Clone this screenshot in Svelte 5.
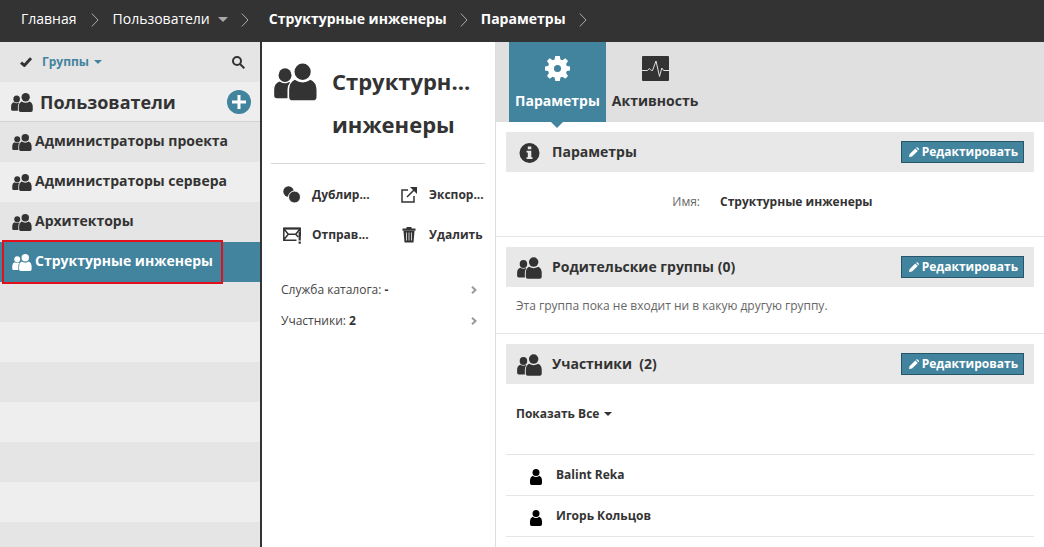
<script>
  const groups = [
    { name: 'Администраторы проекта' },
    { name: 'Администраторы сервера' },
    { name: 'Архитекторы' },
    { name: 'Структурные инженеры', current: true }
  ];
  const actions = [
    { icon: 'duplicate', label: 'Дублир...' },
    { icon: 'export', label: 'Экспор...' },
    { icon: 'send', label: 'Отправ...' },
    { icon: 'trash', label: 'Удалить' }
  ];
  const facts = [
    { label: 'Служба каталога:', value: '-' },
    { label: 'Участники:', value: '2' }
  ];
  const members = ['Balint Reka', 'Игорь Кольцов'];
</script>

{#snippet people()}
  <svg class="people" viewBox="0 0 44 38" aria-hidden="true">
    <ellipse cx="11.3" cy="12" rx="6.6" ry="7" />
    <path d="M5.8 18.4q5.4 3.6 9.6.6l1 .6q-2.6 3-2.6 7.400v8.600H3q-2.800 0-2.800-2.800V27q0-6.800 5.600-8.600z" />
    <ellipse cx="29.300" cy="8.500" rx="8.300" ry="8.400" />
    <path d="M21.200 16.800q8 5.200 16.200 0Q43.500 19.800 43.500 27v7.300q0 3.500-3.500 3.500H19q-3.500 0-3.500-3.500V27q0-7.200 5.700-10.200z" />
  </svg>
{/snippet}

{#snippet chevron()}
  <svg class="chevron" viewBox="0 0 8 14" aria-hidden="true"><path d="M.8.5 7 7 .8 13.500" /></svg>
{/snippet}

{#snippet edit()}
  <button class="edit">
    <svg viewBox="0 0 10 10" aria-hidden="true">
      <path d="M0 10 .5 7.200 6.300 1.400 8.800 3.900 3 9.600zM7 .8q1-1 2-.1l.5.5q.9 1 0 2z" />
    </svg>
    Редактировать
  </button>
{/snippet}

<div class="page">
  <nav class="crumbs">
    <a href="#home" class="home">Главная</a>
    {@render chevron()}
    <a href="#users" class="with-caret">Пользователи <span class="caret"></span></a>
    {@render chevron()}
    <a href="#group" class="strong wide">Структурные инженеры</a>
    {@render chevron()}
    <a href="#settings" class="strong">Параметры</a>
    {@render chevron()}
  </nav>

  <div class="columns">
    <aside class="sidebar">
      <div class="filter">
        <svg class="check" viewBox="0 0 12 10" aria-hidden="true"><path d="M1 5.600 4.400 8.400 11 1.200" /></svg>
        <button class="group-menu">Группы <span class="caret"></span></button>
        <button class="search" aria-label="Поиск">
          <svg viewBox="0 0 13 13" aria-hidden="true"><circle cx="5" cy="5" r="4" /><path d="M8 8l4.300 4.300" /></svg>
        </button>
      </div>
      <div class="list-head">
        {@render people()}
        <h2>Пользователи</h2>
        <button class="add" aria-label="Добавить">
          <svg viewBox="0 0 24 24" aria-hidden="true"><circle cx="12" cy="12" r="12" /><path d="M12 5v14M5 12h14" /></svg>
        </button>
      </div>
      <ul class="groups">
        {#each groups as group}
          <li class:current={group.current}>
            <a href="#group">{@render people()}{group.name}</a>
          </li>
        {/each}
      </ul>
    </aside>

    <section class="summary">
      <header>
        {@render people()}
        <h1><span>Структурн...</span><span>инженеры</span></h1>
      </header>
      <div class="actions">
        {#each actions as action}
          <button>
            <svg viewBox="0 0 18 18" aria-hidden="true">
              {#if action.icon === 'duplicate'}
                <circle cx="5.500" cy="5.500" r="5.200" />
                <circle class="halo" cx="11.500" cy="11" r="6" />
              {:else if action.icon === 'export'}
                <path class="line thin" d="M8 4H2v12h12v-6M7 11l7-7" />
                <path d="M10 1h7v7z" />
              {:else if action.icon === 'send'}
                <path class="line thin" d="M13.500 14.200H.8V2.500h16.400V10M1 3l4.300 5.200h7.400L17 3M1 13.500l4.300-5.300M12.700 8.200l2.600 2.800" />
                <path d="M.3 1.500h17.400v2H.3zM15.600 6h2.200v8.500h-2.200zM15.600 15.500h2.200v2.200h-2.200z" />
              {:else}
                <path d="M2.500 2.500h4V1h5v1.500h4v2.200h-13zM3.500 5h11l-1 11.500h-9z" />
                <path class="slots" d="M6.500 6.500v8M9 6.500v8M11.500 6.500v8" />
              {/if}
            </svg>
            {action.label}
          </button>
        {/each}
      </div>
      <ul class="facts">
        {#each facts as fact}
          <li>
            <a href="#fact">
              <span>{fact.label} <b>{fact.value}</b></span>
              <svg viewBox="0 0 6 8" aria-hidden="true"><path d="M1 .8 4.500 4 1 7.200" /></svg>
            </a>
          </li>
        {/each}
      </ul>
    </section>

    <main>
      <nav class="tabs">
        <a href="#settings" class="active">
          <svg class="gear" viewBox="0 0 24 24" aria-hidden="true">
            <path
              fill-rule="evenodd"
              d="M9.800 0h4.400l.6 3.300 1.900.8 2.800-1.900 2.600 2.600-1.900 2.800.8 1.900 3 .6v3.800l-3 .6-.8 1.900 1.900 2.800-2.600 2.600-2.800-1.900-1.900.8-.6 3.300H9.800l-.6-3.300-1.900-.8-2.800 1.900-2.600-2.600 1.900-2.800-.8-1.900-3-.6v-3.800l3-.6.8-1.900-1.900-2.800 2.600-2.600 2.800 1.900 1.900-.8zM12 8.600a3.400 3.400 0 1 0 0 6.800 3.400 3.400 0 0 0 0-6.800z"
            />
          </svg>
          Параметры
        </a>
        <a href="#activity">
          <svg class="pulse" viewBox="0 0 27 25" aria-hidden="true">
            <rect width="27" height="25" rx="1" />
            <path d="M0 14.500h5.500l1.800-2 2 2h1.200L14 5l3.500 15.500 2.300-8.500 1.800 2.500H27" />
          </svg>
          Активность
        </a>
      </nav>

      <section class="block">
        <div class="bar">
          <svg class="info" viewBox="0 0 20 20" aria-hidden="true">
            <circle cx="10" cy="10" r="10" />
            <path d="M8.300 3.500h3.500v2.700H8.300zM7 7.800h4.800v6.500H13V16H7v-1.700h1.300V9.500H7z" />
          </svg>
          <h3>Параметры</h3>
          {@render edit()}
        </div>
        <dl>
          <dt>Имя:</dt>
          <dd>Структурные инженеры</dd>
        </dl>
      </section>

      <section class="block">
        <div class="bar">
          {@render people()}
          <h3>Родительские группы (0)</h3>
          {@render edit()}
        </div>
        <p>Эта группа пока не входит ни в какую другую группу.</p>
      </section>

      <section class="block">
        <div class="bar">
          {@render people()}
          <h3>Участники&nbsp; (2)</h3>
          {@render edit()}
        </div>
        <button class="show-all">Показать Все <span class="caret"></span></button>
        <ul class="members">
          {#each members as member}
            <li>
              <svg viewBox="0 0 12 16" aria-hidden="true">
                <circle cx="6" cy="3.500" r="3.500" />
                <path d="M2.600 6.800q3.400 2.500 6.800 0Q12 8 12 11v3.200q0 1.800-1.800 1.800H1.800Q0 16 0 14.200V11q0-3 2.600-4.200z" />
              </svg>
              {member}
            </li>
          {/each}
        </ul>
      </section>
    </main>
  </div>
</div>

<style>
  :global(body) {
    margin: 0;
    background: #fff;
  }

  .page {
    display: flex;
    flex-direction: column;
    min-height: 100vh;
    color: #333;
    font: 660 12px/20px 'Open Sans', 'Noto Sans', sans-serif;
  }

  .page * {
    box-sizing: border-box;
  }

  a {
    color: inherit;
    text-decoration: none;
  }

  button {
    padding: 0;
    border: 0;
    background: none;
    color: inherit;
    font: inherit;
    cursor: pointer;
  }

  ul,
  dl,
  dd,
  p,
  h1,
  h2,
  h3 {
    margin: 0;
    padding: 0;
    list-style: none;
  }

  h1,
  h2,
  h3 {
    font-weight: inherit;
  }

  svg {
    flex: none;
    display: block;
    fill: currentColor;
  }

  .caret {
    display: inline-block;
    flex: none;
    border: 4px solid transparent;
    border-top-color: currentColor;
    border-bottom: 0;
  }

  .crumbs {
    display: flex;
    align-items: center;
    gap: 13px;
    height: 42px;
    padding: 0 21px 4px;
    background: #333;
    color: #fff;
    font-size: 14px;
    font-weight: 400;
  }

  .crumbs .strong {
    font-weight: 700;
  }

  .crumbs .wide {
    margin-left: 7px;
  }

  .home {
    margin-right: 1px;
  }

  .with-caret {
    display: flex;
    align-items: center;
    gap: 8px;
    margin-left: 1px;
  }

  .with-caret .caret {
    color: #aaa;
    border-width: 5px 5px 0;
  }

  .chevron {
    width: 8px;
    height: 14px;
    margin-top: 2px;
    fill: none;
    stroke: #aaa;
  }

  .columns {
    flex: 1;
    display: grid;
    grid-template-columns: minmax(0, 262fr) minmax(0, 234fr) minmax(0, 548fr);
  }

  .sidebar {
    border-right: 2px solid #333;
    background: repeating-linear-gradient(#e5e5e5 0 40px, #eee 40px 80px);
  }

  .filter,
  .list-head {
    display: flex;
    align-items: center;
    height: 40px;
  }

  .filter {
    padding: 0 15px 0 20px;
  }

  .check {
    width: 12px;
    height: 10px;
    margin-right: 10px;
    fill: none;
    stroke: #333;
    stroke-width: 3;
  }

  .group-menu {
    display: flex;
    align-items: center;
    gap: 5px;
    color: #42839d;
    font-weight: 700;
  }

  .search {
    margin-left: auto;
  }

  .search svg {
    width: 13px;
    height: 13px;
    fill: none;
    stroke: #333;
    stroke-width: 2;
  }

  .list-head {
    padding: 0 9px 0 11px;
    border-bottom: 1px solid #d4d4d4;
  }

  .list-head .people {
    width: 22px;
    height: 19px;
    margin-top: 2px;
    margin-right: 7px;
  }

  h2 {
    font-size: 18px;
  }

  .add {
    margin-left: auto;
    color: #42839d;
  }

  .add svg {
    width: 24px;
    height: 24px;
  }

  .add path {
    stroke: #fff;
    stroke-width: 3;
  }

  .groups a {
    display: flex;
    align-items: center;
    gap: 3px;
    height: 40px;
    padding: 0 12px 2px;
    font-size: 14px;
  }

  .groups .people {
    width: 20px;
    height: 17px;
    margin-top: 2px;
  }

  .groups .current {
    position: relative;
    background: #42839d;
    color: #fff;
  }

  .groups .current a {
    font-weight: 700;
  }

  .groups .current::after {
    content: '';
    position: absolute;
    inset: -2px 37px -2px 2px;
    border: 2px solid #e2101c;
  }

  .summary {
    padding: 18px 10px 0 9px;
    border-right: 1px solid #ddd;
  }

  .summary header {
    display: flex;
    align-items: flex-start;
    gap: 15px;
    padding: 0 3px 17px;
    border-bottom: 1px solid #d8d8d8;
  }

  .summary header .people {
    width: 43px;
    height: 38px;
    margin-top: 3px;
  }

  h1 {
    font-size: 22px;
    line-height: 43px;
  }

  h1 span {
    display: block;
  }

  .actions {
    display: grid;
    grid-template-columns: minmax(0, 107fr) minmax(0, 85fr);
    column-gap: 10px;
    padding: 11px 0 0 12px;
  }

  .actions button {
    display: flex;
    align-items: center;
    gap: 11px;
    height: 40px;
    white-space: nowrap;
  }

  .actions svg {
    width: 18px;
    height: 18px;
  }

  .halo {
    stroke: #fff;
  }

  .line {
    fill: none;
    stroke: #333;
    stroke-width: 2;
  }

  .thin {
    stroke-width: 1.5;
  }

  .slots {
    stroke: #ccc;
  }

  .facts {
    padding: 19px 8px 0 10px;
  }

  .facts a {
    display: flex;
    align-items: center;
    justify-content: space-between;
    height: 31px;
    color: #444;
    font-weight: 400;
  }

  .facts b {
    color: #333;
    font-weight: 700;
  }

  .facts svg {
    width: 6px;
    height: 8px;
    fill: none;
    stroke: #999;
    stroke-width: 2;
  }

  .tabs {
    display: flex;
    height: 80px;
    padding-left: 13px;
    background: #e0e0e0;
    font-size: 14px;
  }

  .tabs a {
    position: relative;
    display: flex;
    flex-direction: column;
    align-items: center;
    justify-content: space-between;
    padding: 14px 6px 11px;
  }

  .tabs .active {
    background: #42839d;
    color: #fff;
    font-weight: 700;
  }

  .tabs .active::after {
    content: '';
    position: absolute;
    top: 100%;
    border: 6px solid transparent;
    border-top-color: #42839d;
    border-bottom: 0;
  }

  .gear {
    width: 25px;
    height: 25px;
  }

  .pulse {
    width: 27px;
    height: 25px;
  }

  .pulse path {
    fill: none;
    stroke: #e0e0e0;
  }

  .block {
    padding: 10px 10px 0;
  }

  .block + .block {
    border-top: 1px solid #e5e5e5;
  }

  .bar {
    display: flex;
    align-items: center;
    height: 40px;
    padding: 0 10px 0 11px;
    background: #e8e8e8;
  }

  .bar .people,
  .bar .info {
    width: 25px;
    height: 22px;
    margin-top: 2px;
    margin-right: 10px;
  }

  .bar .info {
    height: 20px;
  }

  .info path {
    fill: #e8e8e8;
  }

  h3 {
    font-size: 14px;
  }

  .edit {
    display: flex;
    align-items: center;
    gap: 3px;
    height: 22px;
    margin-left: auto;
    padding: 0 5px 0 7px;
    border: 1px solid #27566b;
    background: #42839d;
    color: #fff;
    font-weight: 700;
  }

  .edit svg {
    width: 10px;
    height: 10px;
  }

  dl {
    display: grid;
    grid-template-columns: 194fr 314fr;
    gap: 20px;
    padding: 20px 0 24px;
  }

  dt {
    color: #666;
    font-weight: 400;
    text-align: right;
  }

  p {
    padding: 9px 10px 17px;
    color: #666;
    font-weight: 400;
  }

  .show-all {
    display: flex;
    align-items: center;
    gap: 5px;
    height: 60px;
    padding: 0 10px;
  }

  .members {
    padding-top: 10px;
  }

  .members li {
    display: flex;
    align-items: center;
    gap: 14px;
    height: 41px;
    padding: 0 24px;
    border-top: 1px solid #e5e5e5;
  }

  .members li:last-child {
    height: 42px;
    border-bottom: 1px solid #e5e5e5;
  }

  .members svg {
    width: 12px;
    height: 16px;
    margin-top: 4px;
    color: #000;
  }
</style>
